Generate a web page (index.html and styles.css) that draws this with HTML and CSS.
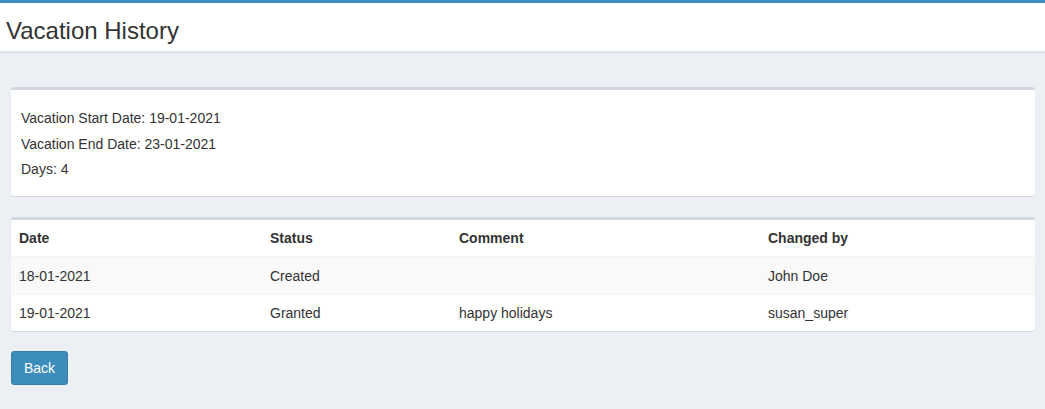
FILE: index.html
```html
<!DOCTYPE html>
<html lang="en">
<head>
<meta charset="utf-8">
<title>Vacation History</title>
<link rel="stylesheet" href="styles.css">
</head>
<body>
<header class="page-header">
  <h1 class="page-title">Vacation History</h1>
</header>
<main class="content">
  <section class="box">
    <div class="box-body details">
      <p class="detail">Vacation Start Date: 19-01-2021</p>
      <p class="detail">Vacation End Date: 23-01-2021</p>
      <p class="detail">Days: 4</p>
    </div>
  </section>
  <section class="box">
    <table class="history">
      <colgroup>
        <col class="c-date">
        <col class="c-status">
        <col class="c-comment">
        <col class="c-changed">
      </colgroup>
      <thead>
        <tr><th>Date</th><th>Status</th><th>Comment</th><th>Changed by</th></tr>
      </thead>
      <tbody>
        <tr class="striped"><td>18-01-2021</td><td>Created</td><td></td><td>John Doe</td></tr>
        <tr><td>19-01-2021</td><td>Granted</td><td>happy holidays</td><td>susan_super</td></tr>
      </tbody>
    </table>
  </section>
  <div class="actions">
    <button class="btn-primary" type="button">Back</button>
  </div>
</main>
</body>
</html>
```

FILE: styles.css
```css
* { box-sizing: border-box; }
html, body {
  margin: 0;
  padding: 0;
  background: #ecf0f5;
  font-family: "Liberation Sans", Arial, sans-serif;
  font-size: 14px;
  color: #333;
  line-height: 20px;
}
.page-header {
  background: #fff;
  border-top: 3px solid #3c8dbc;
  border-bottom: 1px solid #dcdfe4;
  box-shadow: 0 1px 1px rgba(0,0,0,0.05);
  padding: 15px 7px 7px 6px;
}
.page-title {
  margin: 0;
  font-size: 24px;
  font-weight: 400;
  line-height: 26px;
  color: #333;
}
.content {
  padding: 35px 10px 20px 11px;
  display: flex;
  flex-direction: column;
  align-items: stretch;
}
.box {
  background: #fff;
  border-top: 3px solid #d2d6de;
  border-radius: 3px;
  box-shadow: 0 1px 1px rgba(0,0,0,0.1);
  margin-bottom: 21px;
}
.box + .box { margin-bottom: 20px; }
.details {
  padding: 18px 10px 17px;
  display: flex;
  flex-direction: column;
  gap: 5.5px;
}
.detail { margin: 0; }
.history {
  width: 100%;
  border-collapse: collapse;
}
.c-date { width: 251px; }
.c-status { width: 189px; }
.c-comment { width: 309px; }
.history th, .history td {
  padding: 8px;
  text-align: left;
  vertical-align: top;
  line-height: 20px;
  height: 36px;
}
.history th {
  font-weight: 700;
  border-bottom: 2px solid #f4f4f4;
}
.history td { border-top: 1px solid #f4f4f4; }
.history tr.striped td { background: #f9f9f9; }
.actions { display: flex; }
.btn-primary {
  font-family: inherit;
  font-size: 14px;
  line-height: 20px;
  padding: 6px 12px;
  color: #fff;
  background: #3c8dbc;
  border: 1px solid #367fa9;
  border-radius: 3px;
  cursor: pointer;
}
```
